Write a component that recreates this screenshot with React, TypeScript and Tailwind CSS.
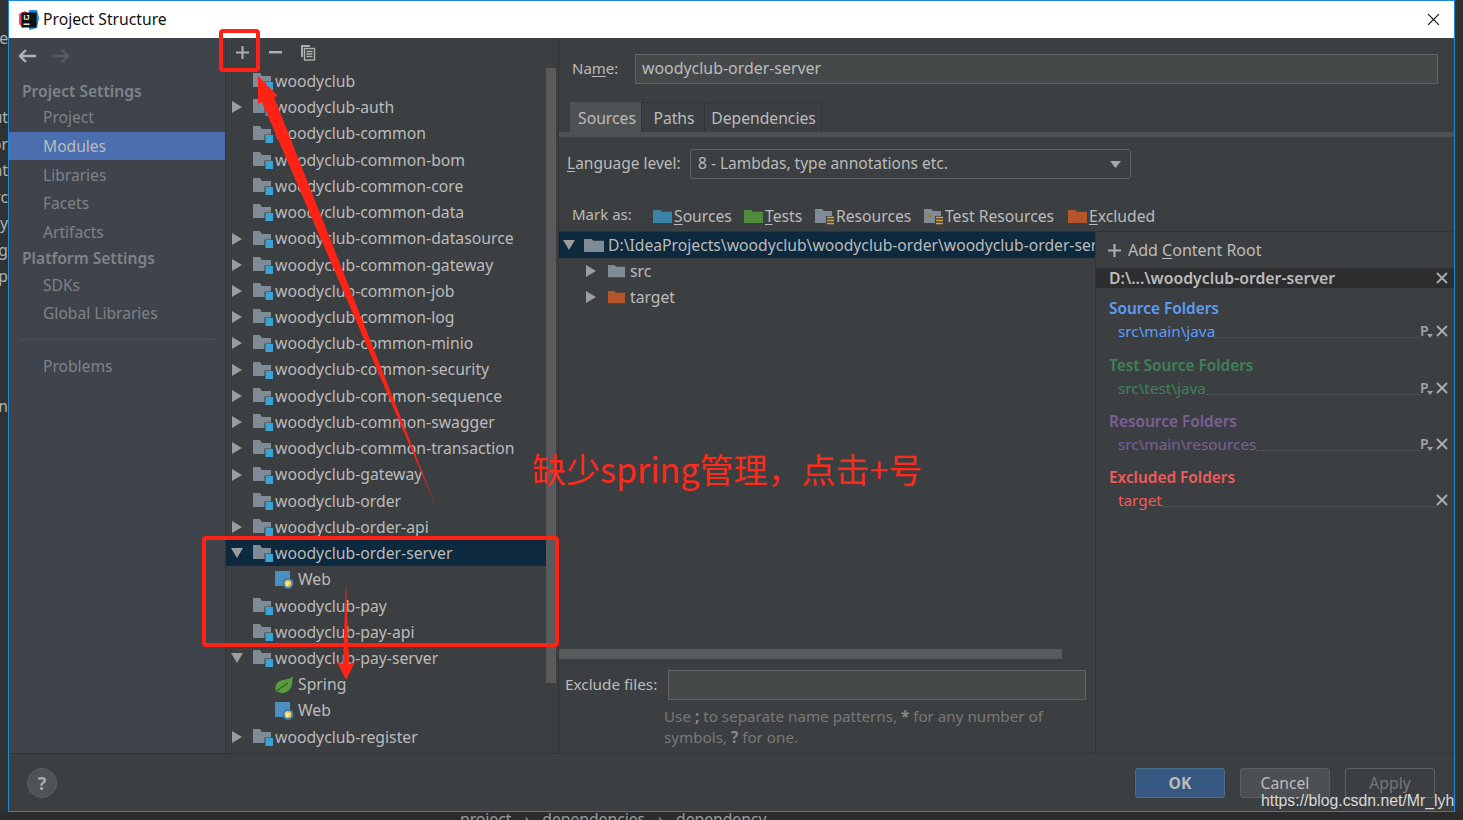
import React from "react";

const F = "font-['Noto_Sans','Open_Sans',sans-serif]";

function XIcon({ s = 12, c = "#a9abad", w = 1.9, cls = "" }: { s?: number; c?: string; w?: number; cls?: string }) {
  return (
    <svg width={s} height={s} viewBox="0 0 12 12" className={`shrink-0 ${cls}`}>
      <path d="M1 1l10 10M11 1L1 11" stroke={c} strokeWidth={w} />
    </svg>
  );
}
function PlusIcon({ s = 13, c = "#aaacae", cls = "" }: { s?: number; c?: string; cls?: string }) {
  return (
    <svg width={s} height={s} viewBox="0 0 13 13" className={`shrink-0 ${cls}`}>
      <path d="M6.5 0v13M0 6.5h13" stroke={c} strokeWidth="2.2" />
    </svg>
  );
}

function Arrow({ open }: { open?: boolean }) {
  return (
    <svg width="12" height="12" viewBox="0 0 12 12" className="shrink-0">
      {open ? <path d="M0 1h12L6 11z" fill="#9a9c9e" /> : <path d="M1 0v12L11 6z" fill="#9a9c9e" />}
    </svg>
  );
}

function Folder({ color = "#7f8b95", w = 19, h = 16 }: { color?: string; w?: number; h?: number }) {
  return (
    <svg width={w} height={h} viewBox="0 0 19 16" className="shrink-0" preserveAspectRatio="none">
      <path d="M0 1h7l2 2h10v12H0z" fill={color} />
    </svg>
  );
}

function ModuleIcon() {
  return (
    <svg width="20" height="18" viewBox="0 0 20 18" className="shrink-0">
      <path d="M0 1h7l2 3h9v11H0z" fill="#7f8b95" />
      <rect x="11.5" y="9.5" width="8" height="8" fill="#3c3f41" />
      <rect x="12.5" y="10" width="7.5" height="8" fill="#3ba4d4" />
    </svg>
  );
}

function WebIcon() {
  return (
    <svg width="19" height="19" viewBox="0 0 19 19" className="shrink-0">
      <rect x="0" y="1" width="15" height="15" fill="#4a8fc0" />
      <circle cx="13" cy="13.5" r="5.5" fill="#3a7cb0" />
      <circle cx="13" cy="13.5" r="3.4" fill="#f4c94f" />
      <path d="M11 12.5h3.4v1.5h-1.6v2.2h-1z" fill="#fff3b0" />
    </svg>
  );
}

function SpringIcon() {
  return (
    <svg width="19" height="18" viewBox="0 0 19 18" className="shrink-0">
      <path d="M18 0C17 5 18 11 13 15 9 18 4 17 1 15-1 10 2 5 8 4 12 3 16 3 18 0z" fill="#5b9a3d" />
      <path d="M2 15C5 12 9 10 13 7" stroke="#2f5f25" strokeWidth="1.2" fill="none" />
    </svg>
  );
}

function MarkIcon({ kind }: { kind: "test" | "res" }) {
  return (
    <svg width="19" height="17" viewBox="0 0 19 17" className="shrink-0">
      <path d="M0 1h7l2 2h8v12H0z" fill="#7f8b95" />
      {kind === "test" && <path d="M2 8l3-2v4z" fill="#d8622f" />}
      {kind === "test" && <path d="M5.5 5.5l2.5 2.5-2.5 2.5z" fill="#4c9a52" />}
      <rect x="11" y="8" width="8" height="9" fill="#3c3f41" />
      <path d="M12 9.5h7M12 12.5h7M12 15.5h7" stroke="#d9a343" strokeWidth="1.5" />
    </svg>
  );
}

const tree: { name: string; arrow?: "r" | "d"; child?: "web" | "spring"; sel?: boolean }[] = [
  { name: "woodyclub" },
  { name: "woodyclub-auth", arrow: "r" },
  { name: "woodyclub-common" },
  { name: "woodyclub-common-bom" },
  { name: "woodyclub-common-core" },
  { name: "woodyclub-common-data" },
  { name: "woodyclub-common-datasource", arrow: "r" },
  { name: "woodyclub-common-gateway", arrow: "r" },
  { name: "woodyclub-common-job", arrow: "r" },
  { name: "woodyclub-common-log", arrow: "r" },
  { name: "woodyclub-common-minio", arrow: "r" },
  { name: "woodyclub-common-security", arrow: "r" },
  { name: "woodyclub-common-sequence", arrow: "r" },
  { name: "woodyclub-common-swagger", arrow: "r" },
  { name: "woodyclub-common-transaction", arrow: "r" },
  { name: "woodyclub-gateway", arrow: "r" },
  { name: "woodyclub-order" },
  { name: "woodyclub-order-api", arrow: "r" },
  { name: "woodyclub-order-server", arrow: "d", sel: true },
  { name: "Web", child: "web" },
  { name: "woodyclub-pay" },
  { name: "woodyclub-pay-api" },
  { name: "woodyclub-pay-server", arrow: "d" },
  { name: "Spring", child: "spring" },
  { name: "Web", child: "web" },
  { name: "woodyclub-register", arrow: "r" },
];

function TreeRow({ r }: { r: (typeof tree)[number] }) {
  return (
    <div className={`h-[26.24px] flex items-center text-[15.75px] ${r.sel ? "bg-[#0d293e]" : ""}`}>
      {r.child ? (
        <div className="pl-[49px] flex items-center">
          <div className="w-[23px] flex">{r.child === "web" ? <WebIcon /> : <SpringIcon />}</div>
          <span className="-mt-[0.5px]">{r.name}</span>
        </div>
      ) : (
        <div className="pl-[5px] flex items-center">
          <div className="w-[22px] flex">{r.arrow && <Arrow open={r.arrow === "d"} />}</div>
          <div className="w-[22px] flex"><ModuleIcon /></div>
          <span className="-mt-[0.5px]">{r.name}</span>
        </div>
      )}
    </div>
  );
}

function SideHead({ t, h }: { t: string; h: string }) {
  return <div className={`pl-[13px] font-semibold text-[#7f8386] flex items-center ${h}`}>{t}</div>;
}
function SideItem({ t, h, sel }: { t: string; h: string; sel?: boolean }) {
  return (
    <div className={`pl-[34px] flex items-center ${h} ${sel ? "bg-[#4b6eaf] text-[#bbbbbb]" : "text-[#7f8386]"}`}>{t}</div>
  );
}

function PIcon() {
  return (
    <span className="relative text-[14px] leading-[14px] text-[#a0a2a4] w-[16px] h-[14px] shrink-0 font-semibold">
      P
      <svg width="6" height="4" viewBox="0 0 6 4" className="absolute right-[3px] bottom-0"><path d="M0 0h6L3 4z" fill="#a0a2a4" /></svg>
    </span>
  );
}

function Section({ title, path, color, cls, p = true }: { title: string; path: string; color: string; cls: string; p?: boolean }) {
  return (
    <div className={cls}>
      <div className={`h-[20px] pl-[13px] leading-[20px] font-semibold text-[15.4px] ${color}`}>{title}</div>
      <div className="h-[20px] mt-[2px] pl-[22px] pr-[6px] flex items-center">
        <span className={`${color} text-[15.3px]`}>{path}</span>
        <div className="flex-1 self-end mb-[3px] border-b border-dotted border-[#5e6163]" />
        {p && <PIcon />}
        <XIcon />
      </div>
    </div>
  );
}

function Mark({ icon, label, u, cls }: { icon: React.ReactNode; label: string; u: boolean; cls: string }) {
  return (
    <div className={`flex items-center ${cls}`}>
      {icon}
      <span className="ml-[2px]">
        {u ? <><span className="underline underline-offset-2">{label[0]}</span>{label.slice(1)}</> : label}
      </span>
    </div>
  );
}

const leftBits = [
  ["h-[30px]", "e"], ["h-[79px]", "ut"], ["h-[27px]", "or"], ["h-[26px]", "at"], ["h-[27px]", "rc"],
  ["h-[26px]", "ay"], ["h-[27px]", "eg"], ["h-[26px]", "p"], ["h-[130px]", "n"],
];

export default function App() {
  return (
    <div className={`relative w-[1463px] h-[820px] overflow-hidden bg-[#2b2b2b] text-[15.7px] leading-[20px] text-[#bbbbbb] ${F}`}>
      <div className="flex h-[812px]">
        {/* behind: left edge of the editor */}
        <div className="w-[8px] pt-[18px] shrink-0 overflow-hidden bg-[#2f3133] text-[#b0b2b4]">
          {leftBits.map(([h, t], i) => (
            <div key={i} className={`${h} flex items-end justify-end whitespace-nowrap`}>{t}</div>
          ))}
        </div>

        {/* dialog window */}
        <div className="flex-1 flex flex-col min-w-0 border border-[#1e88d8] bg-[#3c3f41]">
          <div className="h-[37px] shrink-0 bg-white flex items-center pl-[10px] text-[#111]">
            <svg width="20" height="20" viewBox="0 0 20 20" className="shrink-0">
              <path d="M0 4L6 1l4 3-6 14-4-4z" fill="#f2446a" />
              <path d="M10 0h8l2 8-2 10-8 2z" fill="#1e88e8" />
              <rect x="2.5" y="2.5" width="15" height="15" fill="#111" />
              <text x="4.5" y="10" fontSize="7" fontWeight="700" fill="#fff" fontFamily="Liberation Sans">IJ</text>
              <rect x="4.5" y="13.5" width="6" height="1.4" fill="#fff" />
            </svg>
            <span className="ml-[4px] -mt-[2px]">Project Structure</span>
            <div className="flex-1" />
            <XIcon s={13} c="#111" w={1.1} cls="mr-[14px]" />
          </div>

          <div className="flex-1 flex min-h-0">
            {/* sidebar */}
            <div className="w-[216px] shrink-0 bg-[#3e434c] flex flex-col text-[15.6px]">
              <div className="h-[35px] mb-[2px] flex items-center pl-[9px] gap-[16px]">
                <svg width="18" height="14" viewBox="0 0 18 14"><path d="M18 7H2M8 1L2 7l6 6" fill="none" stroke="#b0b2b4" strokeWidth="2.4" /></svg>
                <svg width="18" height="14" viewBox="0 0 18 14"><path d="M0 7h16M10 1l6 6-6 6" fill="none" stroke="#595c5f" strokeWidth="2.4" /></svg>
              </div>
              <SideHead t="Project Settings" h="h-[31px]" />
              <SideItem t="Project" h="h-[22px]" />
              <SideItem t="Modules" h="h-[28px] mt-[4px]" sel />
              <SideItem t="Libraries" h="h-[30px]" />
              <SideItem t="Facets" h="h-[26px]" />
              <SideItem t="Artifacts" h="h-[32px]" />
              <SideHead t="Platform Settings" h="h-[20px]" />
              <SideItem t="SDKs" h="h-[34px]" />
              <SideItem t="Global Libraries" h="h-[22px]" />
              <div className="h-px bg-[#4a4e55] mx-[10px] mt-[15px]" />
              <SideItem t="Problems" h="h-[26px] mt-[13px]" />
            </div>

            {/* module tree */}
            <div className="w-[334px] shrink-0 border-l border-r border-[#313335] flex flex-col relative">
              <div className="h-[30px] shrink-0 flex items-center pl-[10px] pb-[2px]">
                <PlusIcon />
                <svg width="13" height="3" viewBox="0 0 13 3" className="ml-[20px]"><rect width="13" height="2.4" fill="#adafb1" /></svg>
                <svg width="16" height="17" viewBox="0 0 16 17" className="ml-[18px]">
                  <path d="M1 1h9v2H3v10H1z" fill="#adafb1" />
                  <rect x="4.5" y="4.5" width="10" height="11.5" fill="none" stroke="#adafb1" strokeWidth="1.4" />
                  <path d="M6.5 7.5h6M6.5 10h6M6.5 12.5h6" stroke="#adafb1" strokeWidth="1.3" />
                </svg>
              </div>
              <div className="flex-1 overflow-hidden whitespace-nowrap">
                {tree.map((r, i) => <TreeRow key={i} r={r} />)}
              </div>
              <div className="absolute right-[2px] top-[30px] w-[10px] h-[615px] bg-[#585a5c]" />
            </div>

            {/* module detail */}
            <div className="flex-1 min-w-0 flex flex-col">
              <div className="h-[30px] mt-[16px] shrink-0 flex items-center pl-[13px]">
                <span className="w-[63px] text-[15px] pb-[2px]">Na<span className="underline underline-offset-2">m</span>e:</span>
                <div className="w-[803px] h-[30px] bg-[#45494a] border border-[#646464] flex items-center pl-[6px] pb-[2px] text-[15.9px]">woodyclub-order-server</div>
              </div>
              <div className="h-[30px] mt-[18px] shrink-0 flex pl-[11px]">
                <div className="w-[71px] bg-[#4e5254] flex items-center justify-center pt-[1px] pl-[3px]">Sources</div>
                <div className="w-[64px] border border-[#313335] border-b-0 flex items-center justify-center pt-[1px] pl-[2px]">Paths</div>
                <div className="w-[117px] border border-l-0 border-[#313335] border-b-0 flex items-center justify-center pt-[1px] pl-[1px]">Dependencies</div>
              </div>
              <div className="h-[5px] shrink-0 bg-[#4e5254]" />
              <div className="h-[30px] mt-[12px] shrink-0 flex items-center pl-[8px] text-[15.5px]">
                <span className="w-[123px] pb-[2px]"><span className="underline underline-offset-2">L</span>anguage level:</span>
                <div className="w-[441px] h-[30px] border border-[#646464] rounded-[3px] flex items-center justify-between pl-[7px] pr-[9px]">
                  <span className="pb-[2px]">8 - Lambdas, type annotations etc.</span>
                  <svg width="11" height="7" viewBox="0 0 11 7"><path d="M0 0h11L5.5 7z" fill="#a5a7a9" /></svg>
                </div>
              </div>
              <div className="h-[30px] mt-[22px] shrink-0 flex items-center pl-[13px]">
                <span className="w-[81px] -mt-[5px] text-[15px]">Mark as:</span>
                <Mark cls="w-[91px]" icon={<Folder color="#3b84a8" w={19} h={15} />} label="Sources" u />
                <Mark cls="w-[71px]" icon={<Folder color="#4f8a3e" w={19} h={15} />} label="Tests" u />
                <Mark cls="w-[109px]" icon={<MarkIcon kind="res" />} label="Resources" u={false} />
                <Mark cls="w-[144px]" icon={<MarkIcon kind="test" />} label="Test Resources" u={false} />
                <Mark cls="" icon={<Folder color="#b5562a" w={19} h={15} />} label="Excluded" u />
              </div>
              <div className="h-px shrink-0 bg-[#313335]" />

              <div className="flex-1 flex min-h-0">
                <div className="w-[536px] shrink-0 flex flex-col">
                  <div className="h-[26px] shrink-0 bg-[#0d293e] flex items-center pl-[4px] whitespace-nowrap overflow-hidden">
                    <Arrow open />
                    <div className="ml-[9px] mr-[4px] flex"><Folder w={20} h={15} /></div>
                    <span className="-mt-[1px]">D:\IdeaProjects\woodyclub\woodyclub-order\woodyclub-order-server</span>
                  </div>
                  <div className="h-[26px] shrink-0 flex items-center pl-[26px]">
                    <Arrow />
                    <div className="ml-[11px] mr-[5px] flex"><Folder w={17} h={14} /></div>
                    <span className="-mt-[1px]">src</span>
                  </div>
                  <div className="h-[26px] shrink-0 flex items-center pl-[26px]">
                    <Arrow />
                    <div className="ml-[11px] mr-[5px] flex"><Folder color="#b5562a" w={17} h={14} /></div>
                    <span className="-mt-[1px]">target</span>
                  </div>
                  <div className="flex-1" />
                  <div className="h-[10px] w-[503px] shrink-0 bg-[#585a5c]" />
                  <div className="h-[30px] mt-[11px] shrink-0 flex items-center pl-[6px] text-[15.3px]">
                    <span className="w-[103px] pb-[2px]">Exclude files:</span>
                    <div className="w-[418px] h-[30px] bg-[#45494a] border border-[#646464]" />
                  </div>
                  <div className="mt-[6px] ml-[105px] h-[47px] leading-[21px] text-[15.2px] text-[#787878] w-[420px]">
                    Use <b className="text-[#8a8a8a]">;</b> to separate name patterns, <b className="text-[#8a8a8a]">*</b> for any number of symbols, <b className="text-[#8a8a8a]">?</b> for one.
                  </div>
                </div>
                <div className="flex-1 border-l border-[#313335] flex flex-col min-w-0">
                  <div className="h-[36px] shrink-0 flex items-center pl-[12px]">
                    <PlusIcon />
                    <span className="ml-[7px] text-[16px]">Add <span className="underline underline-offset-2">C</span>ontent Root</span>
                  </div>
                  <div className="h-[20px] shrink-0 bg-[#2b2d2e] flex items-center justify-between pl-[13px] pr-[6px] font-semibold">
                    <span className="text-[15.8px] -mt-[1px]">D:\...\woodyclub-order-server</span>
                    <XIcon />
                  </div>
                  <Section cls="mt-[11px]" title="Source Folders" path="src\main\java" color="text-[#5c9df5]" />
                  <Section cls="mt-[15px]" title="Test Source Folders" path="src\test\java" color="text-[#42805a]" />
                  <Section cls="mt-[14px]" title="Resource Folders" path="src\main\resources" color="text-[#7b5f96]" />
                  <Section cls="mt-[14px]" title="Excluded Folders" path="target" color="text-[#f35a5a]" p={false} />
                </div>
              </div>
            </div>
          </div>

          {/* footer */}
          <div className="h-[58px] shrink-0 border-t border-[#313335] flex items-start">
            <div className="ml-[18px] mt-[14px] w-[30px] h-[30px] rounded-full bg-[#505355] border border-[#5c5f61] flex items-center justify-center font-bold text-[18px] text-[#a8aaac]">?</div>
            <div className="flex-1" />
            <div className="mt-[14px] w-[90px] h-[30px] rounded-[3px] bg-[#365880] border border-[#4c708c] flex items-center justify-center font-bold text-[#bbbbbb]">OK</div>
            <div className="mt-[14px] ml-[15px] w-[90px] h-[30px] rounded-[3px] bg-[#4c5052] border border-[#5e6060] flex items-center justify-center">Cancel</div>
            <div className="mt-[14px] ml-[15px] mr-[19px] w-[90px] h-[30px] rounded-[3px] border border-[#5e6060] flex items-center justify-center text-[#777777]">Apply</div>
          </div>
        </div>

        <div className="w-[8px] shrink-0 bg-[#2f3133]" />
      </div>

      {/* behind: bottom of the editor */}
      <div className="h-[8px] overflow-hidden pl-[460px] flex gap-[13px] leading-[14px] text-[#9a9c9e] whitespace-nowrap">
        <span>project</span><span>›</span><span>dependencies</span><span>›</span><span>dependency</span>
      </div>

      {/* annotations drawn over the screenshot */}
      <div className="absolute left-[219px] top-[29px] w-[41px] h-[43px] border-4 border-[#fe2315] rounded-[4px]" />
      <div className="absolute left-[202px] top-[536px] w-[357px] h-[111px] border-4 border-[#fe2315] rounded-[4px]" />
      <svg className="absolute left-0 top-0 pointer-events-none" width="1463" height="820" viewBox="0 0 1463 820">
        <path d="M258 76L278 96 274 97 437 509 262 102 258 104z" fill="#fe2315" />
        <path d="M346 582L349 664 355 662 346 680 337 662 343 664z" fill="#fe2315" />
      </svg>
      <div className="absolute left-[532px] top-[447px] text-[34px] leading-[44px] text-[#fe2a1a] whitespace-nowrap font-['Noto_Sans_CJK_SC','Noto_Sans',sans-serif]">缺少spring管理，点击+号</div>
      <div className="absolute left-[1261px] top-[792px] text-[15.8px] leading-[18px] text-[#d8d8d8] whitespace-nowrap font-['Liberation_Sans',sans-serif]">https://blog.csdn.net/Mr_lyh</div>
    </div>
  );
}
